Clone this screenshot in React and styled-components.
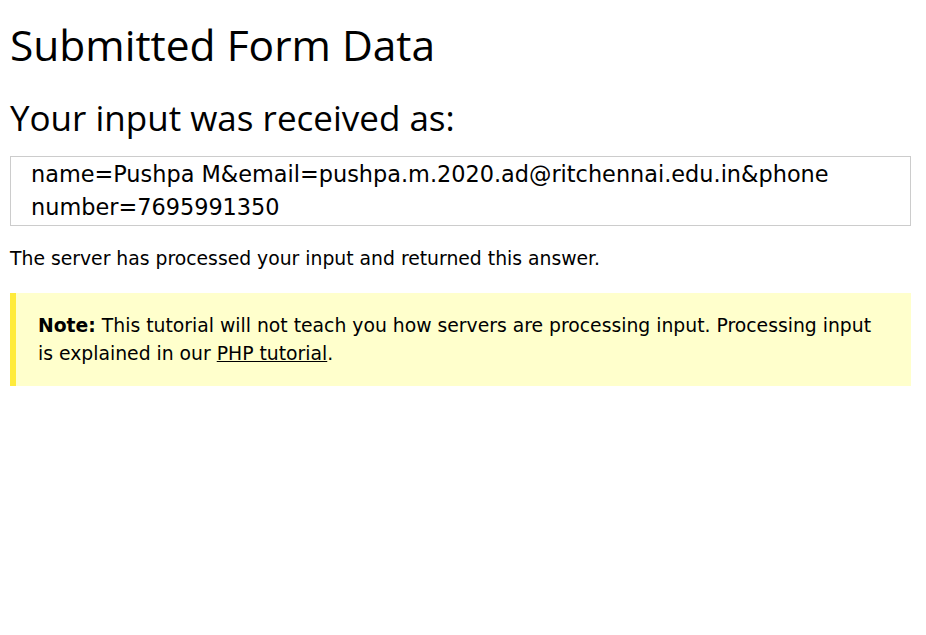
import React from 'react';
import styled, { createGlobalStyle } from 'styled-components';

const GlobalStyle = createGlobalStyle`
  html, body {
    margin: 0;
    padding: 0;
    background: #fff;
    color: #000;
    font-family: "DejaVu Sans", Verdana, sans-serif;
    font-size: 18.8px;
    line-height: 1.5;
  }
`;

const Page = styled.main`
  padding: 0 15px 0 10px;
`;

const Title = styled.h1`
  margin: 0;
  padding-top: 15px;
  font-family: "Open Sans", "Segoe UI", sans-serif;
  font-weight: 400;
  font-size: 42.5px;
  line-height: 60px;
`;

const Subtitle = styled.h2`
  margin: 18px 0 0;
  font-family: "Open Sans", "Segoe UI", sans-serif;
  font-weight: 400;
  font-size: 35px;
  line-height: 50px;
`;

const Received = styled.div`
  margin-top: 13px;
  border: 1px solid #ccc;
  padding: 1px 20px;
  font-size: 22.4px;
  line-height: 33px;
  word-break: break-word;
`;

const Message = styled.p`
  margin: 19px 0 0;
  line-height: 28px;
`;

const Note = styled.div`
  margin-top: 20px;
  background: #ffffcc;
  border-left: 6px solid #ffeb3b;
  padding: 19px 22px 18px 22px;

  p {
    margin: 0;
    line-height: 28px;
  }

  a {
    color: #000;
    text-decoration: underline;
  }
`;

const App = () => (
  <>
    <GlobalStyle />
    <Page>
      <Title>Submitted Form Data</Title>
      <Subtitle>Your input was received as:</Subtitle>
      <Received>
        name=Pushpa M&amp;email=pushpa.m.2020.ad@ritchennai.edu.in&amp;phone number=7695991350
      </Received>
      <Message>The server has processed your input and returned this answer.</Message>
      <Note>
        <p>
          <b>Note:</b> This tutorial will not teach you how servers are processing input. Processing input
          is explained in our <a href="#php">PHP tutorial</a>.
        </p>
      </Note>
    </Page>
  </>
);

export default App;
